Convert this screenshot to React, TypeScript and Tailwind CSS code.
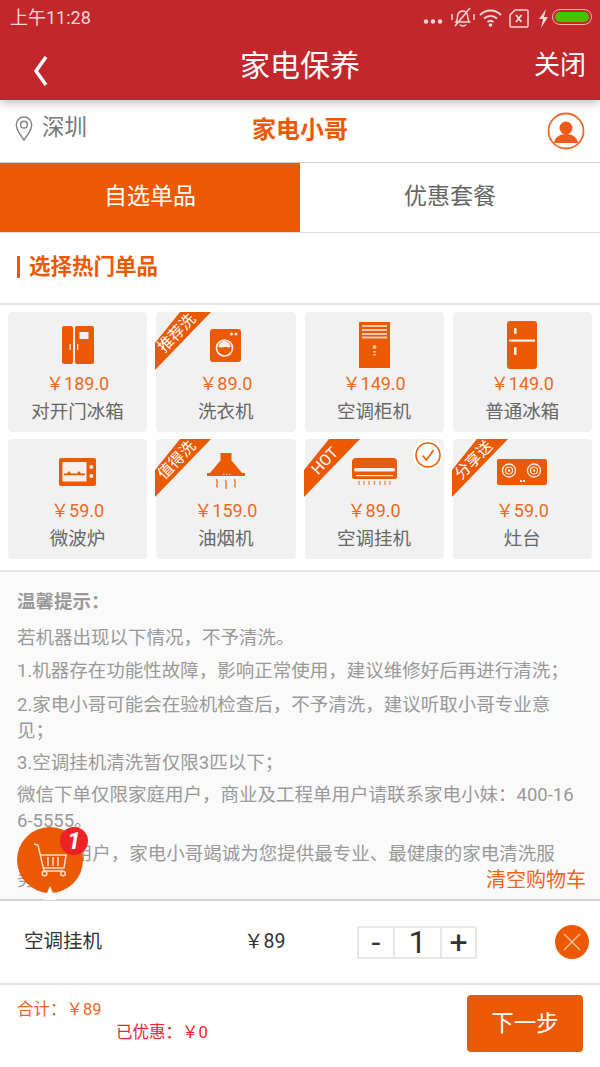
import React from 'react';

const O = '#ec5903';
const FONT = "font-['Roboto','Noto_Sans_CJK_SC',sans-serif]";

const DoubleFridge = () => (
  <svg width="32" height="38" viewBox="0 0 32 38">
    <rect x="0" y="0" width="11" height="38" rx="2" fill={O} />
    <rect x="13" y="0" width="19" height="38" rx="2" fill={O} />
    <rect x="17.500" y="6" width="9" height="7" fill="#f1f1f1" />
    <rect x="7.500" y="18" width="1.300" height="6" fill="#f1f1f1" />
    <rect x="15" y="18" width="1.300" height="6" fill="#f1f1f1" />
  </svg>
);

const Washer = () => (
  <svg width="31" height="33" viewBox="0 0 31 33">
    <rect x="0" y="0" width="31" height="33" rx="3" fill={O} />
    <circle cx="14.500" cy="19" r="8" fill="none" stroke="#f7efe9" strokeWidth="1.700" />
    <path d="M8.500 18a6 6 0 0 1 12 0c-2 1.200-3.500-.5-6 0s-4 1-6 0z" fill="#f7efe9" />
    <circle cx="21.500" cy="5" r="1.500" fill="#f7efe9" />
    <circle cx="26" cy="5" r="1.500" fill="#f7efe9" />
  </svg>
);

const Cabinet = () => (
  <svg width="31" height="46" viewBox="0 0 31 46">
    <rect x="0" y="0" width="31" height="46" fill={O} />
    <path d="M3 4h25M3 8h25M3 12h25M3 15.500h25" stroke="#f4c9ad" strokeWidth="1.800" />
    <circle cx="15.500" cy="25" r="2" fill="#f4c9ad" />
    <rect x="14.300" y="29" width="2.400" height="1.600" fill="#f4c9ad" />
    <rect x="14.300" y="32" width="2.400" height="1.600" fill="#f4c9ad" />
  </svg>
);

const Fridge = () => (
  <svg width="30" height="48" viewBox="0 0 30 48">
    <rect x="0" y="0" width="30" height="48" rx="3" fill={O} />
    <rect x="2" y="18.500" width="26" height="2.200" fill="#f1f1f1" />
    <rect x="7" y="7" width="2.600" height="6" rx="1" fill="#f1f1f1" />
    <rect x="7" y="26" width="2.600" height="8" rx="1" fill="#f1f1f1" />
  </svg>
);

const Microwave = () => (
  <svg width="37" height="28" viewBox="0 0 37 28">
    <rect x="0" y="0" width="37" height="28" rx="2" fill={O} />
    <rect x="3.500" y="4" width="24" height="19.500" fill="#f7efe9" />
    <path d="M5 15.500h3l2-2.500 2 2.500h6l2-2.500 2 2.500h4v1.800H5z" fill={O} />
    <circle cx="32.300" cy="9" r="2" fill="#f7efe9" />
    <circle cx="32.300" cy="18" r="2" fill="#f7efe9" />
  </svg>
);

const Hood = () => (
  <svg width="38" height="38" viewBox="0 0 38 38">
    <rect x="13.500" y="0" width="11" height="8" fill={O} />
    <path d="M13 8h12l10 12H3z" fill={O} />
    <rect x="0" y="20" width="38" height="3" fill={O} />
    <path d="M16 21.300h1.500M19 21.300h1.500M22 21.300h1.500" stroke="#f1f1f1" strokeWidth="1" />
    <path d="M10 26c-1.500 2 1.500 3.500 0 5.500-.5 1 0 2 .5 3M19 27c-1.500 2 1.500 3.500 0 5.500-.5 1 0 2 .5 3.500M28 26c-1.500 2 1.500 3.500 0 5.500-.5 1 0 2 .5 3" fill="none" stroke="#ee7a38" strokeWidth="1.500" />
  </svg>
);

const WallAc = () => (
  <svg width="45" height="28" viewBox="0 0 45 28">
    <path d="M4 0h37a4 4 0 0 1 4 4v15a2 2 0 0 1-2 2H2a2 2 0 0 1-2-2V4a4 4 0 0 1 4-4z" fill={O} />
    <rect x="2" y="10" width="41" height="3.500" rx="1.500" fill="#f1f1f1" />
    <rect x="4" y="17" width="37" height="1.200" fill="#f1f1f1" />
    <path d="M7 23v4M12 23v4M17 23v4M22.500 23v4M28 23v4M33 23v4M38 23v4" stroke="#f08a4d" strokeWidth="1.300" />
  </svg>
);

const Stove = () => (
  <svg width="50" height="26" viewBox="0 0 50 26">
    <rect x="0" y="0" width="50" height="26" rx="2" fill={O} />
    <circle cx="12" cy="11.500" r="6.500" fill="none" stroke="#f1f1f1" strokeWidth="1.300" />
    <circle cx="12" cy="11.500" r="3.500" fill="none" stroke="#f1f1f1" strokeWidth="1.200" />
    <circle cx="12" cy="11.500" r="1.200" fill="#f1f1f1" />
    <circle cx="37" cy="11.500" r="6.500" fill="none" stroke="#f1f1f1" strokeWidth="1.300" />
    <circle cx="37" cy="11.500" r="3.500" fill="none" stroke="#f1f1f1" strokeWidth="1.200" />
    <circle cx="37" cy="11.500" r="1.200" fill="#f1f1f1" />
    <rect x="23" y="21" width="2" height="2" fill="#f1f1f1" />
    <rect x="26" y="21" width="2" height="2" fill="#f1f1f1" />
  </svg>
);

const items = [
  { name: '对开门冰箱', price: '189.0', icon: <DoubleFridge /> },
  { name: '洗衣机', price: '89.0', icon: <Washer />, ribbon: '推荐洗' },
  { name: '空调柜机', price: '149.0', icon: <Cabinet /> },
  { name: '普通冰箱', price: '149.0', icon: <Fridge /> },
  { name: '微波炉', price: '59.0', icon: <Microwave /> },
  { name: '油烟机', price: '159.0', icon: <Hood />, ribbon: '值得洗' },
  { name: '空调挂机', price: '89.0', icon: <WallAc />, ribbon: 'HOT', checked: true },
  { name: '灶台', price: '59.0', icon: <Stove />, ribbon: '分享送' },
];

const Ribbon = ({ label }: { label: string }) => (
  <div className="absolute left-[-1px] top-0 h-[58px] w-[56px]">
    <svg width="56" height="58" viewBox="0 0 56 58" className="absolute left-0 top-0">
      <polygon points="25,0 56,0 0,58 0,31" fill={O} />
    </svg>
    <span className="absolute left-[-1px] top-[11px] w-[44px] -rotate-[46deg] text-center text-[15.500px] leading-[22px] whitespace-nowrap text-white">
      {label}
    </span>
  </div>
);

const Card = ({ item }: { item: (typeof items)[number] }) => (
  <div className="relative flex h-[120px] flex-col items-center rounded-[4px] bg-[#f1f1f1]">
    {item.ribbon && <Ribbon label={item.ribbon} />}
    {item.checked && (
      <div className="absolute right-[1px] top-[1px] flex h-[30px] w-[30px] items-center justify-center rounded-full bg-white">
        <svg width="26" height="26" viewBox="0 0 26 26">
          <circle cx="13" cy="13" r="12" fill="#fff" stroke={O} strokeWidth="1.500" />
          <path d="M7.500 13.500l4 4.500 7-10" fill="none" stroke={O} strokeWidth="1.500" />
        </svg>
      </div>
    )}
    <div className="mt-[6px] flex h-[54px] items-center justify-center">{item.icon}</div>
    <div className="text-[18px] leading-[24px] text-[#ee6a1f]">￥{item.price}</div>
    <div className="mt-[1px] text-[18.500px] leading-[30px] text-[#666]">{item.name}</div>
  </div>
);

const StatusIcons = () => (
  <div className="flex items-center">
    <svg width="150" height="24" viewBox="0 0 150 24" fill="none" stroke="#f3d6d6">
      <circle cx="27" cy="16.500" r="2.200" fill="#f3d6d6" stroke="none" />
      <circle cx="34" cy="16.500" r="2.200" fill="#f3d6d6" stroke="none" />
      <circle cx="41" cy="16.500" r="2.200" fill="#f3d6d6" stroke="none" />
      <path d="M57 17c2-2 1-5 2-8 1-2 3-3 5-3s4 2 4.500 4c.5 3 0 5 2 7z" strokeWidth="1.500" />
      <path d="M61 19.500c1 2 5 2 6 0" strokeWidth="1.500" />
      <path d="M56 21L71 3" strokeWidth="1.500" />
      <path d="M53 9v6M75 9v6" strokeWidth="1.500" />
      <path d="M81 10c6-6 15-6 21 0M85 13.500c4-3.500 9-3.500 13 0M88.500 17c2-1.700 4-1.700 6 0" strokeWidth="2" />
      <circle cx="91.500" cy="20" r="1.800" fill="#f3d6d6" stroke="none" />
      <path d="M116 5h12a1 1 0 0 1 1 1v15a1 1 0 0 1-1 1h-16a1 1 0 0 1-1-1V10z" strokeWidth="1.500" />
      <path d="M117 10l5.500 7M122.500 10l-5.500 7" strokeWidth="1.800" />
      <path d="M147 4l-7 10h4l-2 9 7-11h-4z" fill="#f3d6d6" stroke="none" />
    </svg>
    <div className="ml-[3px] flex h-[16px] w-[40px] items-center rounded-full border border-[#f3b5b5] p-[2px]">
      <div className="h-full w-full rounded-full bg-[#47c200]" />
    </div>
  </div>
);

const App: React.FC = () => {
  return (
    <div className={`relative flex h-[1067px] w-[600px] flex-col overflow-hidden bg-white ${FONT}`}>
      {/* Red header */}
      <div className="relative z-10 h-[100px] shrink-0 bg-[#c1272b] shadow-[0_2px_10px_rgba(0,0,0,0.3)]">
        <div className="flex h-[33px] items-center justify-between pl-[10px] pr-[8px]">
          <span className="mt-[2px] text-[18px] text-[#f3d6d6]">上午11:28</span>
          <StatusIcons />
        </div>
        <div className="grid h-[67px] grid-cols-[1fr_auto_1fr] items-center pb-[2px] pl-[14px] pr-[14px]">
          <svg width="16" height="32" viewBox="0 0 16 32" className="ml-[19px] mt-[10px]">
            <path d="M13 2L3 16l10 14" fill="none" stroke="#fff" strokeWidth="3.500" />
          </svg>
          <div className="text-[30px] text-white">家电保养</div>
          <div className="text-right text-[26px] text-white">关闭</div>
        </div>
      </div>

      {/* Location bar */}
      <div className="grid h-[63px] shrink-0 grid-cols-[1fr_auto_1fr] items-center border-b border-[#d0d0d0] pl-[15px] pr-[15px]">
        <div className="flex items-center gap-[9px]">
          <svg width="18" height="25" viewBox="0 0 18 26" fill="none" stroke="#808080" strokeWidth="1.500" className="-mt-[5px]">
            <path d="M9 25C5 19 1 15 1 9a8 8 0 0 1 16 0c0 6-4 10-8 16z" />
            <circle cx="9" cy="9" r="3.500" />
          </svg>
          <span className="-mt-[8px] text-[22.500px] leading-none text-[#777]">深圳</span>
        </div>
        <div className="-mt-[2px] text-[24px] font-bold text-[#ec5903]">家电小哥</div>
        <div className="flex justify-end">
          <svg width="38" height="38" viewBox="0 0 38 38">
            <circle cx="19" cy="19" r="17.500" fill="#fff" stroke="#ee6a2a" strokeWidth="1.800" />
            <circle cx="19" cy="16" r="6.500" fill="#ee5a1a" />
            <path d="M7 31c1-6 6-9 12-9s11 3 12 9z" fill="#ee5a1a" />
          </svg>
        </div>
      </div>

      {/* Tabs */}
      <div className="flex h-[70px] shrink-0 border-b border-[#e0e0e0] text-[23px]">
        <div className="flex w-1/2 items-center justify-center bg-[#ec5903] text-white">自选单品</div>
        <div className="flex w-1/2 items-center justify-center text-[#666]">优惠套餐</div>
      </div>

      {/* Section title */}
      <div className="flex h-[72px] shrink-0 items-center gap-[9px] border-b-2 border-[#e5e5e5] pb-[2px] pl-[17px]">
        <div className="h-[22px] w-[3px] bg-[#ec5903]" />
        <div className="text-[21.500px] font-bold text-[#ec5903]">选择热门单品</div>
      </div>

      {/* Product grid */}
      <div className="grid shrink-0 grid-cols-4 gap-x-[9px] gap-y-[7px] border-b-2 border-[#e5e5e5] px-[8px] pb-[11px] pt-[7px]">
        {items.map((item) => (
          <Card key={item.name} item={item} />
        ))}
      </div>

      {/* Notes */}
      <div className="relative min-h-0 flex-1 overflow-hidden bg-[#fafafa] pl-[17px] pr-[23px] pt-[17px] text-[18.500px] leading-[26px] text-[#999] [word-break:break-all]">
        <p className="mb-[10px] font-bold">温馨提示：</p>
        <p className="mb-[7px]">若机器出现以下情况，不予清洗。</p>
        <p className="mb-[8px]">1.机器存在功能性故障，影响正常使用，建议维修好后再进行清洗；</p>
        <p className="mb-[6px]">2.家电小哥可能会在验机检查后，不予清洗，建议听取小哥专业意见；</p>
        <p className="mb-[6px]">3.空调挂机清洗暂仅限3匹以下；</p>
        <p className="mb-[7px]">微信下单仅限家庭用户，商业及工程单用户请联系家电小妹：400-166-5555。</p>
        <p>4. 尊贵用户，家电小哥竭诚为您提供最专业、最健康的家电清洗服务。</p>
        <div className="absolute bottom-[6px] right-[14px] text-[20px] leading-[26px] text-[#f0651d]">清空购物车</div>
      </div>

      {/* Cart row */}
      <div className="flex h-[86px] shrink-0 items-center border-y-2 border-[#e3e3e3] border-t-[#d4d4d4] pl-[24px] pr-[11px]">
        <div className="w-[220px] text-[19.500px] text-[#333]">空调挂机</div>
        <div className="w-[113px] text-[19.500px] text-[#333]">￥89</div>
        <div className="flex h-[33px] w-[120px] items-center border-2 border-[#e8e8e8] text-[#333]">
          <div className="flex h-full w-[34px] items-center justify-center text-[32px]">-</div>
          <div className="flex h-full w-[49px] items-center justify-center border-x-2 border-[#e8e8e8] text-[32px]">1</div>
          <div className="flex h-full w-[33px] items-center justify-center text-[32px]">+</div>
        </div>
        <div className="ml-auto flex h-[34px] w-[34px] items-center justify-center rounded-full bg-[#ec5903]">
          <svg width="20" height="20" viewBox="0 0 20 20">
            <path d="M2 2l16 16M18 2L2 18" stroke="#f7c4a5" strokeWidth="1.300" />
          </svg>
        </div>
      </div>

      {/* Footer */}
      <div className="flex h-[82px] shrink-0 items-start justify-between px-[17px] pt-[10px]">
        <div className="text-[16.500px] leading-[22px]">
          <div className="mt-[4px] text-[#f0651d]">合计：￥89</div>
          <div className="ml-[99px] mt-[1px] text-[#f0252a]">已优惠：￥0</div>
        </div>
        <div className="flex h-[57px] w-[116px] items-center justify-center rounded-[4px] bg-[#ec5903] text-[22.500px] text-white">
          下一步
        </div>
      </div>

      {/* Floating cart */}
      <div className="absolute left-[17px] top-[827px] z-20 h-[67px] w-[67px]">
        <svg width="67" height="73" viewBox="0 0 67 73" className="absolute left-0 top-0">
          <circle cx="33" cy="33" r="33" fill={O} />
          <path d="M33 59l6 14H27z" fill="#fff" />
          <path d="M17 17l4 1 6 26h19M24 28h25l-2 13H27" fill="none" stroke="#fbe0cf" strokeWidth="1.500" />
          <path d="M31 30v9M36 30v9M41 30v9" stroke="#fbe0cf" strokeWidth="1.500" />
          <circle cx="27.500" cy="46.500" r="2.300" fill={O} stroke="#fbe0cf" strokeWidth="1.500" />
          <circle cx="46" cy="46.500" r="2.300" fill={O} stroke="#fbe0cf" strokeWidth="1.500" />
        </svg>
        <div className="absolute left-[43px] top-0 flex h-[28px] w-[28px] items-center justify-center rounded-full bg-[#ee2127] text-[24px] font-bold italic text-white">
          1
        </div>
      </div>
    </div>
  );
};

export default App;
